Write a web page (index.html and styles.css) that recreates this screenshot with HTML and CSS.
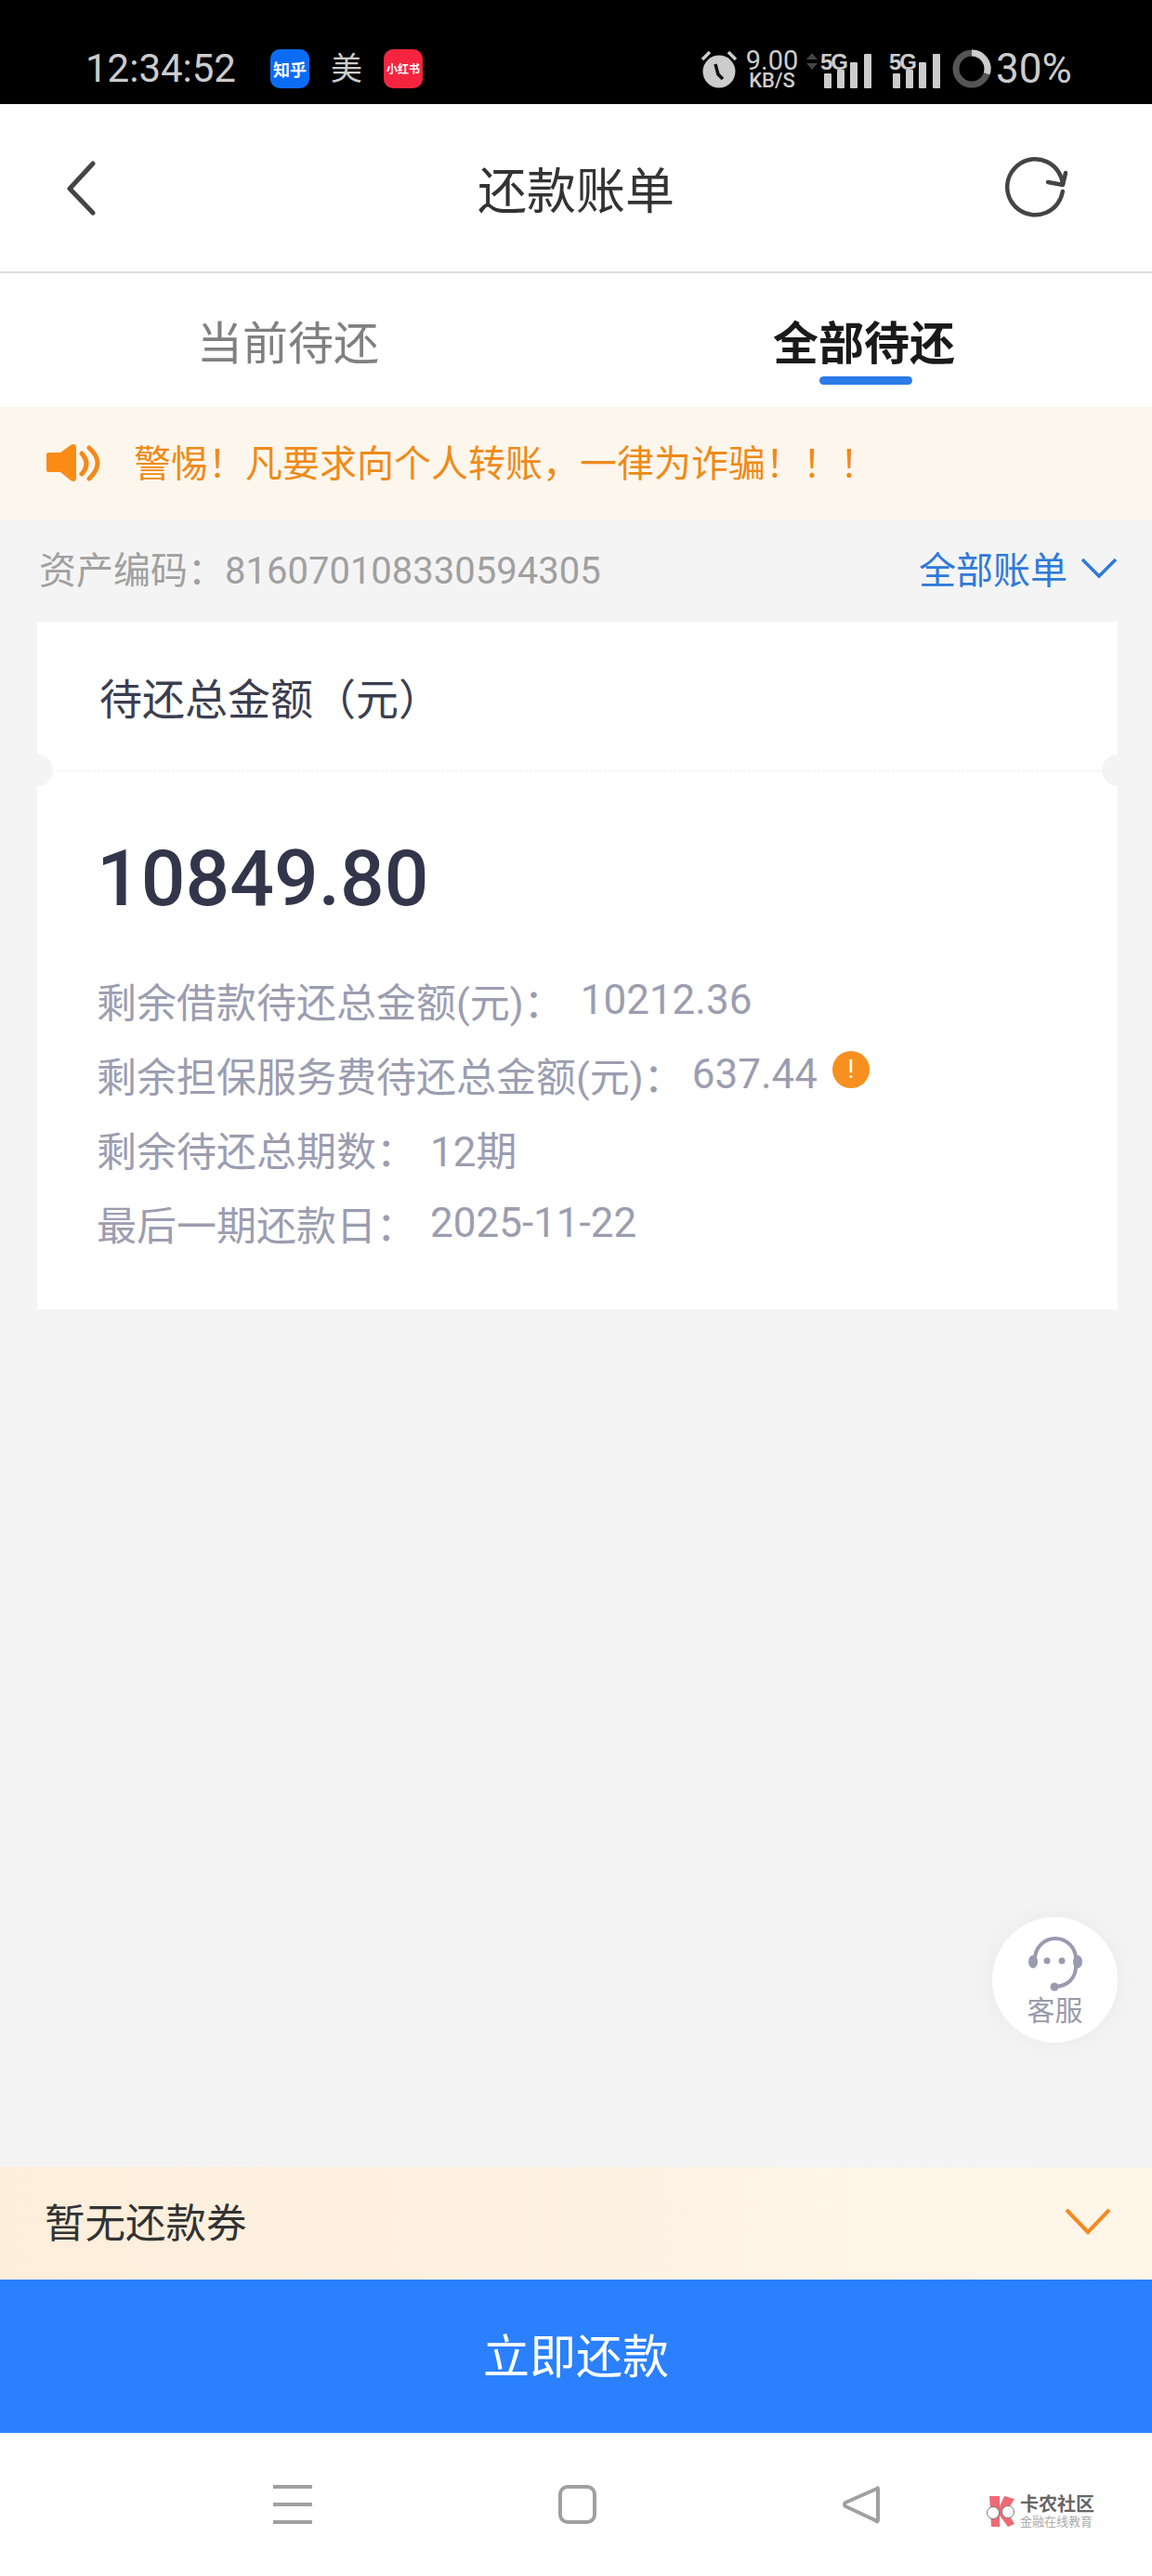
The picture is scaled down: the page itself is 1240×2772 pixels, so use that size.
FILE: index.html
```html
<!DOCTYPE html>
<html lang="zh">
<head>
    <meta charset="UTF-8">
    <meta name="viewport" content="width=device-width, initial-scale=1.0">
    <title>还款账单</title>
    <link rel="stylesheet" href="styles.css">
</head>
<body>
<div class="page">

    <!-- 状态栏 -->
    <div class="status-bar">
        <span class="clock">12:34:52</span>
        <span class="app-badge app-zhihu">知乎</span>
        <span class="app-mei">美</span>
        <span class="app-badge app-xhs">小红书</span>

        <div class="status-right">
            <svg class="alarm" width="40" height="42" viewBox="0 0 40 42">
                <circle cx="20" cy="24" r="17.5" fill="#ccc"/>
                <path d="M16 16 L19 27 L24 32" fill="none" stroke="#111" stroke-width="3.5"/>
                <path d="M2 11 L10 3 M38 11 L30 3" stroke="#ccc" stroke-width="3.5"/>
            </svg>
            <div class="speed">
                <span class="speed-num">9.00</span>
                <span class="speed-unit">KB/S</span>
            </div>
            <svg class="updown" width="12" height="18" viewBox="0 0 12 18">
                <path d="M6 0 L12 7 H0 Z M0 11 H12 L6 18 Z" fill="#444"/>
            </svg>
            <div class="signal">
                <span class="five-g">5G</span>
                <svg width="56" height="42" viewBox="0 0 56 42">
                    <rect x="4" y="26" width="8" height="16" rx="1" fill="#ccc"/>
                    <rect x="18" y="22" width="8" height="20" rx="1" fill="#ccc"/>
                    <rect x="32" y="14" width="8" height="28" rx="1" fill="#ccc"/>
                    <rect x="47" y="5" width="8" height="37" rx="1" fill="#ccc"/>
                </svg>
            </div>
            <div class="signal signal-two">
                <span class="five-g">5G</span>
                <svg width="56" height="42" viewBox="0 0 56 42">
                    <rect x="4" y="26" width="8" height="16" rx="1" fill="#ccc"/>
                    <rect x="18" y="22" width="8" height="20" rx="1" fill="#ccc"/>
                    <rect x="32" y="14" width="8" height="28" rx="1" fill="#ccc"/>
                    <rect x="47" y="5" width="8" height="37" rx="1" fill="#ccc"/>
                </svg>
            </div>
            <svg class="battery-ring" width="42" height="42" viewBox="0 0 42 42">
                <circle cx="21" cy="21" r="17" fill="none" stroke="#555" stroke-width="7"/>
                <path d="M21 4 A17 17 0 0 1 37.2 26.2" fill="none" stroke="#ccc" stroke-width="7"/>
            </svg>
            <span class="battery-text">30%</span>
        </div>
    </div>

    <!-- 标题栏 -->
    <header class="nav">
        <svg class="nav-back" width="34" height="60" viewBox="0 0 34 60">
            <path d="M30 4 L5 31 L30 57" fill="none" stroke="#444" stroke-width="5" stroke-linecap="round" stroke-linejoin="round"/>
        </svg>
        <h1 class="nav-title">还款账单</h1>
        <svg class="nav-refresh" width="70" height="66" viewBox="0 0 70 66">
            <path d="M62.8 37 A30 30 0 1 1 63 29" fill="none" stroke="#444" stroke-width="4.5" stroke-linecap="round"/>
            <path d="M47 27 L63 30 L66 17" fill="none" stroke="#444" stroke-width="4.5" stroke-linecap="round" stroke-linejoin="round"/>
        </svg>
    </header>

    <!-- 切换 -->
    <div class="tabs">
        <div class="tab">当前待还</div>
        <div class="tab tab-active">全部待还</div>
    </div>

    <div class="notice">
        <svg class="notice-icon" width="60" height="42" viewBox="0 0 60 42">
            <path d="M2 10 H15 L26 2 Q32 -1 32 5 V37 Q32 43 26 40 L15 31 H2 Q0 31 0 29 V12 Q0 10 2 10 Z" fill="#fa8c16"/>
            <path d="M38 11 Q48 22 38 33" fill="none" stroke="#f28a1c" stroke-width="5" stroke-linecap="round"/>
            <path d="M46 5 Q64 21 46 38" fill="none" stroke="#f28a1c" stroke-width="5" stroke-linecap="round"/>
        </svg>
        <span>警惕！凡要求向个人转账，一律为诈骗！！！</span>
    </div>

    <main class="content">
        <div class="asset-row">
            <span class="asset-code">资产编码：816070108330594305</span>
            <span class="asset-filter">
                全部账单
                <svg width="40" height="24" viewBox="0 0 40 24">
                    <path d="M2 3 L20 21 L38 3" fill="none" stroke="#2f7ad9" stroke-width="3.5"/>
                </svg>
            </span>
        </div>

        <section class="card">
            <div class="card-head">
                待还总金额（元）
                <i class="notch notch-left"></i>
                <i class="notch notch-right"></i>
            </div>
            <div class="card-body">
                <div class="amount">10849.80</div>
                <div class="line">剩余借款待还总金额(元)：<span class="val val-wide">10212.36</span></div>
                <div class="line">
                    剩余担保服务费待还总金额(元)：<span class="val val-tight">637.44</span>
                    <span class="warn">!</span>
                </div>
                <div class="line">剩余待还总期数：<span class="val">12期</span></div>
                <div class="line">最后一期还款日：<span class="val">2025-11-22</span></div>
            </div>
        </section>
    </main>

    <!-- 客服悬浮按钮 -->
    <div class="service">
        <svg width="62" height="60" viewBox="0 0 62 60">
            <path d="M9 30 V25 A22 22 0 0 1 53 25 V33 C53 46 44 54 31 55" fill="none" stroke="#9a9ab0" stroke-width="4"/>
            <ellipse cx="7" cy="28" rx="5" ry="7" fill="#9a9ab0"/>
            <ellipse cx="55" cy="28" rx="5" ry="7" fill="#9a9ab0"/>
            <circle cx="22" cy="27" r="3.5" fill="#9a9ab0"/>
            <circle cx="38" cy="27" r="3.5" fill="#9a9ab0"/>
            <circle cx="30" cy="55" r="4.5" fill="#9a9ab0"/>
        </svg>
        <span>客服</span>
    </div>

    <div class="coupon">
        <span>暂无还款券</span>
        <svg width="50" height="30" viewBox="0 0 50 30">
            <path d="M2 3 L25 27 L48 3" fill="none" stroke="#f58a1f" stroke-width="4"/>
        </svg>
    </div>

    <button class="pay-btn">立即还款</button>

    <!-- 系统导航 -->
    <footer class="sys-nav">
        <div class="sys-menu"><i></i><i></i><i></i></div>
        <div class="sys-home"></div>
        <svg class="sys-back" width="42" height="44" viewBox="0 0 42 44">
            <path d="M38 5 Q39 3 39 6 V38 Q39 42 36 39 L4 24 Q2 22 4 20 Z" fill="none" stroke="#a0a0a0" stroke-width="4" stroke-linejoin="round"/>
        </svg>
        <div class="watermark">
            <svg width="36" height="36" viewBox="0 0 36 36">
                <path d="M4 2 H15 V13 L20 2 L31 5 L23 18 L31 32 L24 35 L15 23 V35 H6 Z" fill="#ee6a74"/>
                <circle cx="8" cy="20" r="6.5" fill="#fff" stroke="#777" stroke-width="1"/>
                <circle cx="24" cy="19" r="6.5" fill="#fff" stroke="#777" stroke-width="1"/>
            </svg>
            <div class="watermark-text">
                <b>卡农社区</b>
                <span>金融在线教育</span>
            </div>
        </div>
    </footer>
</div>
</body>
</html>
```
FILE: styles.css
```css
* {
    box-sizing: border-box;
}

body {
    margin: 0;
    font-family: Roboto, "Noto Sans CJK SC", sans-serif;
    background-color: #f4f4f4;
}

.page {
    position: relative;
    display: flex;
    flex-direction: column;
    width: 1240px;
    height: 2772px;
    overflow: hidden;
}

/* 状态栏 */
.status-bar {
    display: flex;
    align-items: center;
    flex-shrink: 0;
    height: 112px;
    padding: 35px 0 0 92px;
    background-color: #000;
    color: #ccc;
}

.clock {
    width: 199px;
    font-size: 42px;
    line-height: 42px;
}

.app-badge {
    display: flex;
    align-items: center;
    justify-content: center;
    width: 42px;
    height: 42px;
    border-radius: 10px;
    color: #fff;
    font-weight: 700;
}

.app-zhihu {
    background-color: #0a6cf5;
    font-size: 18px;
}

.app-xhs {
    background-color: #f6253f;
    font-size: 12px;
}

.app-mei {
    width: 80px;
    padding-left: 23px;
    font-size: 34px;
    line-height: 42px;
}

.status-right {
    display: flex;
    align-items: center;
    margin-left: 299px;
}

.speed {
    display: flex;
    flex-direction: column;
    align-items: center;
    width: 58px;
    margin-left: 8px;
}

.speed-num {
    font-size: 29px;
    line-height: 26px;
}

.speed-unit {
    font-size: 22px;
    line-height: 18px;
    font-weight: 500;
}

.updown {
    margin: 0 3px 16px 8px;
}

.signal {
    position: relative;
    width: 56px;
    height: 42px;
}

.signal svg {
    display: block;
}

.five-g {
    position: absolute;
    left: 0;
    top: 2px;
    font-family: "Liberation Sans", sans-serif;
    font-size: 24px;
    line-height: 24px;
    font-weight: 700;
    letter-spacing: -2px;
}

.signal-two {
    margin-left: 18px;
}

.battery-ring {
    margin-left: 12px;
}

.battery-text {
    margin-left: 5px;
    font-size: 44px;
    line-height: 42px;
}

/* 标题栏 */
.nav {
    display: grid;
    grid-template-columns: 1fr auto 1fr;
    align-items: center;
    flex-shrink: 0;
    height: 182px;
    padding: 0 70px;
    background-color: #fff;
    border-bottom: 2px solid #dcdcdc;
}

.nav-title {
    margin: 0;
    font-size: 53px;
    font-weight: 400;
    color: #333;
}

.nav-refresh {
    justify-self: end;
    margin-right: 19px;
}

/* 切换 */
.tabs {
    display: flex;
    flex-shrink: 0;
    height: 144px;
    padding-top: 47px;
    background-color: #fff;
}

.tab {
    position: relative;
    flex: 1;
    font-size: 49px;
    line-height: 60px;
    text-align: center;
    color: #808080;
}

.tab-active {
    font-weight: 700;
    color: #1a1a1a;
}

.tab-active::after {
    content: "";
    position: absolute;
    left: 50%;
    top: 64px;
    width: 100px;
    height: 9px;
    margin-left: -48px;
    border-radius: 5px;
    background-color: #2b7be8;
}

/* 提示条 */
.notice {
    display: flex;
    align-items: center;
    flex-shrink: 0;
    gap: 34px;
    height: 121px;
    padding: 0 0 6px 50px;
    background-color: #fdf6ec;
    color: #ef8a1a;
    font-size: 40px;
}

.notice-icon {
    margin-top: 4px;
}

/* 内容 */
.content {
    flex: 1;
    padding: 0 37px 0 40px;
}

.asset-row {
    display: flex;
    align-items: center;
    justify-content: space-between;
    height: 110px;
    padding: 0 0 7px 2px;
    font-size: 40px;
}

.asset-code {
    color: #a0a0a0;
}

.asset-filter {
    display: flex;
    align-items: center;
    gap: 14px;
    color: #2f7ad9;
}

.card {
    overflow: hidden;
    background-color: #fff;
}

.card-head {
    position: relative;
    height: 161px;
    padding: 54px 0 0 67px;
    border-bottom: 1px dashed #eee;
    font-size: 46px;
    line-height: 60px;
    color: #3b3e50;
}

.notch {
    position: absolute;
    bottom: -17px;
    width: 34px;
    height: 34px;
    border-radius: 50%;
    background-color: #f4f4f4;
}

.notch-left {
    left: -17px;
}

.notch-right {
    right: -17px;
}

.card-body {
    padding: 66px 0 53px 64px;
}

.amount {
    margin: 0 0 40px;
    font-size: 84px;
    line-height: 100px;
    font-weight: 500;
    color: #33354a;
}

.line {
    display: flex;
    align-items: center;
    height: 80px;
    font-size: 43px;
    color: #9c9db0;
}

.val {
    margin-left: 15px;
    font-size: 44px;
}

.val-wide {
    margin-left: 18px;
}

.val-tight {
    margin-left: 9px;
}

.warn {
    display: flex;
    align-items: center;
    justify-content: center;
    width: 40px;
    height: 40px;
    margin: -10px 0 0 16px;
    border-radius: 50%;
    background-color: #f7901e;
    color: #fff;
    font-size: 28px;
    line-height: 40px;
}

/* 客服 */
.service {
    position: absolute;
    left: 1068px;
    top: 2063px;
    display: flex;
    flex-direction: column;
    align-items: center;
    width: 135px;
    height: 135px;
    padding-top: 20px;
    border-radius: 50%;
    background-color: #fff;
    box-shadow: 0 0 30px rgba(0, 0, 0, 0.05);
    color: #9a9aa8;
    font-size: 30px;
    line-height: 36px;
}

.service span {
    margin-top: 3px;
}

/* 底部 */
.coupon {
    display: flex;
    align-items: center;
    justify-content: space-between;
    flex-shrink: 0;
    height: 121px;
    padding: 0 44px 6px 48px;
    background: linear-gradient(90deg, #fdeedb, #fff6ea);
    color: #333;
    font-size: 43.5px;
}

.pay-btn {
    flex-shrink: 0;
    height: 165px;
    padding: 0 0 8px;
    border: none;
    background-color: #2a80fe;
    color: #fff;
    font-family: inherit;
    font-size: 50px;
}

.sys-nav {
    position: relative;
    display: flex;
    align-items: center;
    flex-shrink: 0;
    height: 154px;
    padding: 0 0 0 294px;
    background-color: #fff;
}

.sys-menu {
    display: flex;
    flex-direction: column;
    gap: 15px;
    width: 42px;
}

.sys-menu i {
    display: block;
    height: 4px;
    background-color: #a0a0a0;
}

.sys-home {
    width: 41px;
    height: 42px;
    margin-left: 265px;
    border: 4px solid #a0a0a0;
    border-radius: 10px;
}

.sys-back {
    margin-left: 264px;
}

.watermark {
    position: absolute;
    left: 1061px;
    top: 66px;
    display: flex;
    align-items: center;
    gap: 1px;
}

.watermark-text {
    display: flex;
    flex-direction: column;
    line-height: 1;
}

.watermark-text b {
    font-size: 20px;
    color: #666;
}

.watermark-text span {
    margin-top: 2px;
    font-size: 13px;
    color: #aaa;
}
```
